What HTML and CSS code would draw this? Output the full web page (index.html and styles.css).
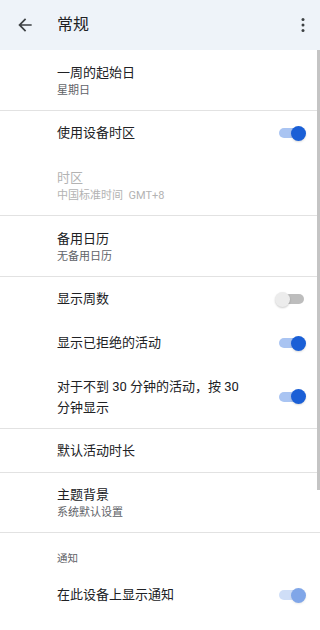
FILE: index.html
```html
<!DOCTYPE html>
<html lang="zh-CN">
<head>
<meta charset="utf-8">
<title>常规</title>
<link rel="stylesheet" href="styles.css">
</head>
<body>
<header class="appbar">
  <span class="icon-btn back">
    <svg width="20" height="20" viewBox="0 0 24 24"><path d="M20 11H7.83l5.59-5.59L12 4l-8 8 8 8 1.41-1.41L7.83 13H20v-2z" fill="#3c4043"/></svg>
  </span>
  <h1 class="title">常规</h1>
  <span class="icon-btn more">
    <svg width="20" height="20" viewBox="0 0 24 24"><circle cx="12" cy="5.5" r="1.8" fill="#3c4043"/><circle cx="12" cy="12" r="1.8" fill="#3c4043"/><circle cx="12" cy="18.5" r="1.8" fill="#3c4043"/></svg>
  </span>
</header>
<main class="list">
  <section class="group">
    <div class="row two">
      <div class="text"><div class="primary">一周的起始日</div><div class="secondary">星期日</div></div>
    </div>
  </section>
  <section class="group">
    <div class="row one">
      <div class="text"><div class="primary">使用设备时区</div></div>
      <span class="switch on"></span>
    </div>
    <div class="row two disabled">
      <div class="text"><div class="primary">时区</div><div class="secondary">中国标准时间&nbsp; GMT+8</div></div>
    </div>
  </section>
  <section class="group">
    <div class="row two">
      <div class="text"><div class="primary">备用日历</div><div class="secondary">无备用日历</div></div>
    </div>
  </section>
  <section class="group">
    <div class="row one">
      <div class="text"><div class="primary">显示周数</div></div>
      <span class="switch"></span>
    </div>
    <div class="row one">
      <div class="text"><div class="primary">显示已拒绝的活动</div></div>
      <span class="switch on"></span>
    </div>
    <div class="row wrap">
      <div class="text"><div class="primary multi">对于不到 30 分钟的活动，按 30 分钟显示</div></div>
      <span class="switch on"></span>
    </div>
  </section>
  <section class="group">
    <div class="row single">
      <div class="text"><div class="primary">默认活动时长</div></div>
    </div>
  </section>
  <section class="group">
    <div class="row two short">
      <div class="text"><div class="primary">主题背景</div><div class="secondary">系统默认设置</div></div>
    </div>
  </section>
  <section class="group last">
    <div class="subheader">通知</div>
    <div class="row notify">
      <div class="text"><div class="primary">在此设备上显示通知</div></div>
      <span class="switch on fading"></span>
    </div>
  </section>
</main>
<div class="scrollbar"></div>
</body>
</html>
```
FILE: styles.css
```css
* { box-sizing: border-box; margin: 0; padding: 0; }
html, body { width: 320px; height: 630px; overflow: hidden; background: #ffffff; }
body {
  font-family: Roboto, "Noto Sans CJK SC", "Noto Sans", sans-serif;
  color: #202124;
  position: relative;
}
.appbar {
  height: 50px;
  background: #eef3f9;
  display: flex;
  align-items: center;
  padding: 0 7px 0 15px;
}
.icon-btn { display: flex; align-items: center; justify-content: center; width: 20px; height: 20px; }
.title {
  font-size: 16px;
  font-weight: 400;
  margin-left: 22px;
  flex: 1;
  color: #202124;
  line-height: 20px;
}
.list { display: flex; flex-direction: column; }
.group { border-bottom: 1px solid #e2e2e2; display: flex; flex-direction: column; }
.group.last { border-bottom: none; }
.row {
  display: flex;
  align-items: center;
  padding: 0 15px 0 57px;
}
.row.two { height: 60px; align-items: flex-start; padding-top: 14px; }
.row.two.short { height: 59px; padding-top: 13px; }
.row.one { height: 44px; }
.row.wrap { height: 63px; }
.row.single { height: 43px; }
.row.notify { height: 56px; }
.text { flex: 1; min-width: 0; }
.primary { font-size: 13px; line-height: 18px; color: #202124; }
.primary.multi { line-height: 21px; width: 196px; padding-top: 1px; }
.secondary { font-size: 11px; line-height: 17px; color: #5f6368; }
.disabled .primary, .disabled .secondary { color: #b3b3b3; }
.subheader {
  font-size: 10.5px;
  line-height: 16px;
  color: #5f6368;
  padding: 18px 0 0 57px;
  height: 34px;
}
.switch {
  position: relative;
  width: 25px;
  height: 10px;
  border-radius: 5px;
  background: #bdbdbd;
  margin-right: 1px;
  flex: none;
}
.switch::after {
  content: "";
  position: absolute;
  top: 50%;
  left: -4px;
  width: 15px;
  height: 15px;
  margin-top: -7.5px;
  border-radius: 50%;
  background: #ececec;
  box-shadow: 0 1px 2px rgba(0,0,0,0.2);
}
.switch.on { background: #a9c4f2; }
.switch.on::after { left: 12px; background: #1a5fd6; box-shadow: 0 1px 2px rgba(0,0,0,0.15); }
.switch.fading { opacity: 0.55; }
.scrollbar {
  position: absolute;
  right: 0;
  top: 50px;
  width: 3px;
  height: 440px;
  background: #c4c4c4;
}
```
